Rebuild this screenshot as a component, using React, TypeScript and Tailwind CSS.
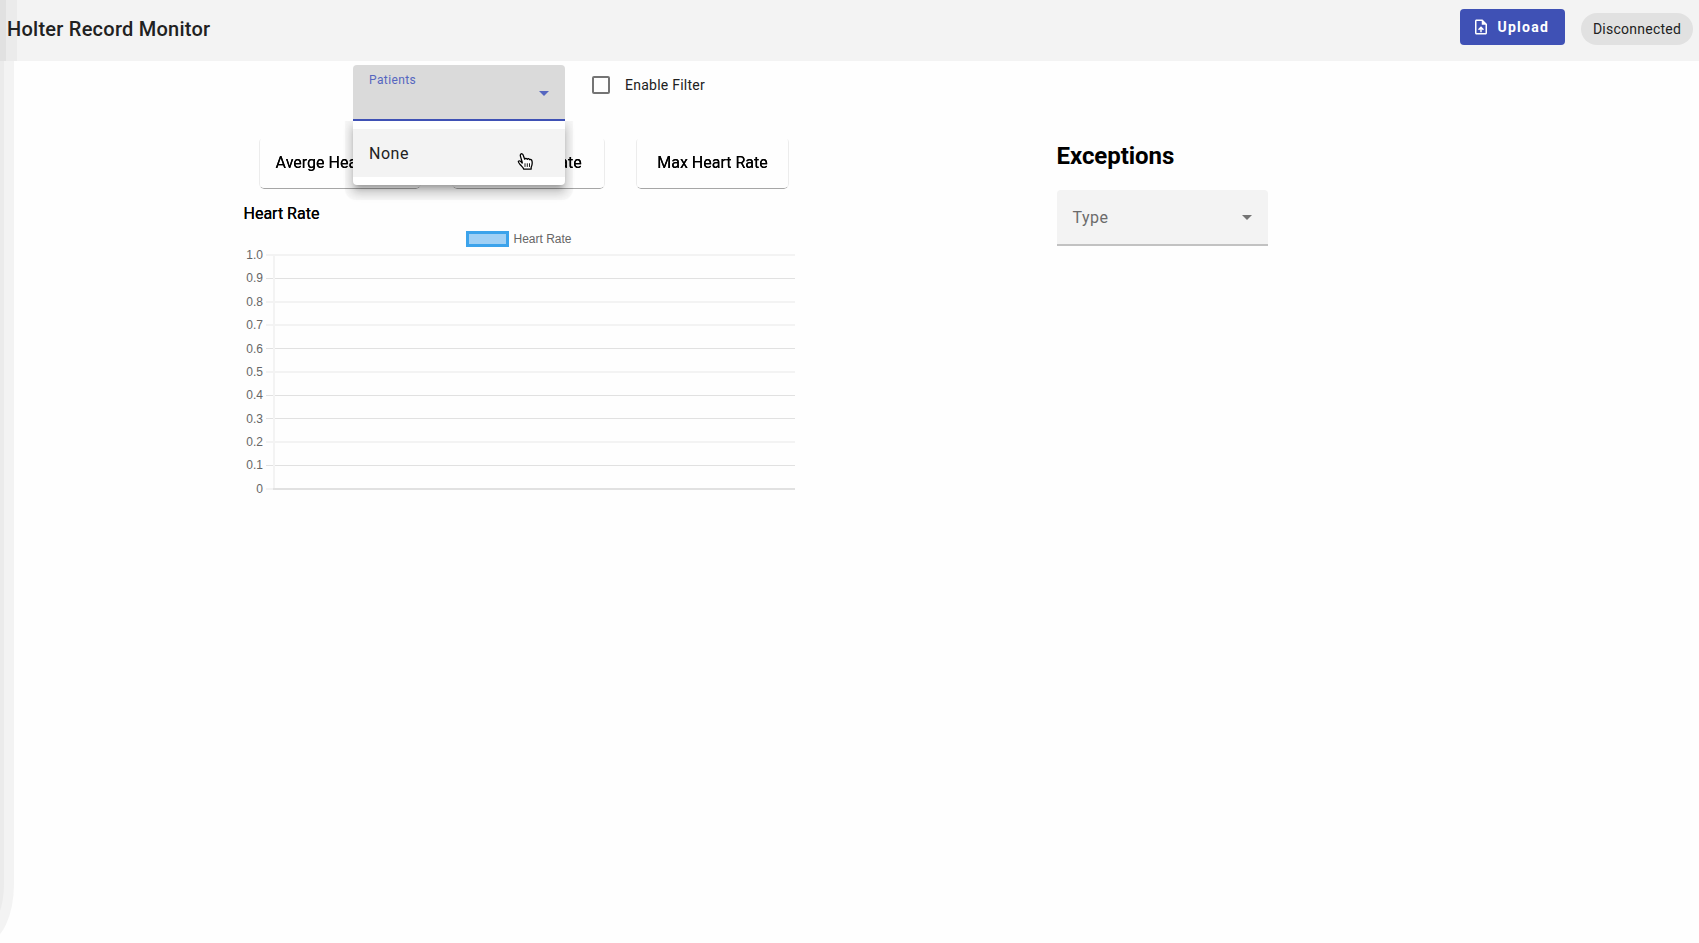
const rows = [
  { label: "1.0", y: 3, thin: false },
  { label: "0.9", y: 26.5, thin: true },
  { label: "0.8", y: 50, thin: false },
  { label: "0.7", y: 73, thin: false },
  { label: "0.6", y: 97, thin: true },
  { label: "0.5", y: 120, thin: false },
  { label: "0.4", y: 143.5, thin: true },
  { label: "0.3", y: 167, thin: true },
  { label: "0.2", y: 190, thin: false },
  { label: "0.1", y: 213.5, thin: true },
  { label: "0", y: 237, thin: false },
];

function Caret({ className }: { className: string }) {
  return (
    <svg className={className} width="10" height="5" viewBox="0 0 10 5">
      <path d="M0 0h10L5 5z" fill="currentColor" />
    </svg>
  );
}

function HandCursor() {
  return (
    <svg className="absolute left-[163.5px] top-[31px]" width="18" height="19" viewBox="0 0 18 19">
      <path
        d="M5.2 10.2 3.5 4.4C2.7 1.6 5.3.8 6.2 3.2l1.5 4c.6-1.2 2.1-1 2.5.1.7-1 2-.7 2.4.4.9-.8 2.2 0 2.4 1.4.5 2.6.2 4.2-.8 6.1l-.1 2H6.8c-.6-2-2.2-2.9-3.5-4.5C1.9 11.1.8 10 1.5 9.2c.9-1 2.1-.1 3.7 1.8z"
        fill="#fff"
        stroke="#000"
        strokeWidth="1.3"
        strokeLinejoin="round"
      />
      <path d="M8 11.3v3.6M10.3 11.3v3.6M12.5 11.3v3.6" stroke="#000" strokeWidth="0.9" />
    </svg>
  );
}

function Header() {
  return (
    <header className="flex h-[61px] shrink-0 items-start justify-between bg-[#f3f3f3] bg-[linear-gradient(90deg,#e1e1e1_6px,#ebebeb_6px,#ebebeb_17px,#f3f3f3_17px)] pr-[6px]">
      <h1 className="pl-[7px] pt-[13px] text-[20px] font-medium leading-8 tracking-[0.25px] text-[#212121]">
        Holter Record Monitor
      </h1>
      <div className="flex items-start">
        <button className="mt-[9px] flex h-9 w-[105.5px] items-center rounded bg-[#3f51b5] pl-[12px] text-white">
          <svg width="18" height="18" viewBox="0 0 24 24" fill="currentColor">
            <path d="M14 2H6c-1.1 0-1.99.9-1.99 2L4 20c0 1.1.89 2 1.99 2H18c1.1 0 2-.9 2-2V8l-6-6zm4 18H6V4h7v5h5v11zM8 15.01l1.41 1.41L11 14.84V19h2v-4.16l1.59 1.59L16 15.01 12.01 11 8 15.01z" />
          </svg>
          <span className="pl-[8px] text-[14px] font-bold leading-[34px] tracking-[1.25px]">Upload</span>
        </button>
        <div className="ml-4 mt-[13px] flex h-8 w-[112px] items-center justify-center rounded-full bg-[#e1e1e1] text-[14px] tracking-[0.25px] text-[#212121]">
          Disconnected
        </div>
      </div>
    </header>
  );
}

function Card({ title, className }: { title: string; className: string }) {
  return (
    <div
      className={`flex h-[52px] items-center justify-center whitespace-nowrap rounded-[5px] border-x border-b border-x-[#ececec] border-b-[#a6a6a6] pt-px text-[16px] text-black [text-shadow:0_0_0.3px_#000] [mask-image:linear-gradient(transparent_2px,#000_3px)] ${className}`}
    >
      {title}
    </div>
  );
}

function Chart() {
  return (
    <svg className="block overflow-visible" width="560" height="245" viewBox="0 0 560 245">
      {rows.map((r) => (
        <g key={r.label}>
          <rect
            x="31"
            y={Math.floor(r.y - 0.5)}
            width="529"
            height={r.thin ? 1 : 2}
            fill={r.thin ? "#e1e1e1" : "#f3f3f3"}
            shapeRendering="crispEdges"
          />
          <text x="28" y={r.y + 3.5} textAnchor="end" fontSize="12" fill="#666" fontFamily="Liberation Sans, Arial, sans-serif">
            {r.label}
          </text>
        </g>
      ))}
      <rect x="38" y="3" width="2" height="234" fill="#f3f3f3" />
      <rect x="38" y="236" width="522" height="2" fill="#e1e1e1" />
    </svg>
  );
}

export default function App() {
  return (
    <div className="relative flex h-[943px] w-[1699px] flex-col overflow-hidden bg-[#fefefe] font-['Roboto',sans-serif]">
      <Header />
      <div className="flex min-h-0 flex-1">
        <aside className="-ml-[14px] h-[881px] w-[28px] shrink-0 overflow-hidden rounded-br-[28px_58px] bg-[#f3f3f3]">
          <div className="h-[866px] w-[18px] rounded-br-[18px_43px] bg-[#ebebeb]" />
        </aside>
        <main className="flex">
          <section className="w-[1043px] pl-[221px]">
            <div className="flex pl-[118px] pt-[4px]">
              <div className="relative h-14 w-[212px] rounded-t border-b-2 border-[#3f51b5] bg-[#dadada] text-[#5566c0]">
                <div className="pl-4 pt-[6px] text-[12px] leading-[18px] tracking-[0.4px]">Patients</div>
                <Caret className="absolute right-4 top-[26px]" />
                <div className="absolute left-0 top-14 z-10 h-16 w-[212px] rounded-b bg-white py-2 shadow-[0_5px_5px_-3px_rgba(0,0,0,0.2),0_8px_10px_1px_rgba(0,0,0,0.14),0_3px_10px_2px_rgba(0,0,0,0.10),0_7px_1px_8px_rgba(0,0,0,0.03)] [clip-path:inset(0_-30px_-40px_-30px)]">
                  <div className="flex h-12 items-center bg-[#f3f3f3] pl-4 pt-px text-[16px] tracking-[0.5px] text-[#212121]">
                    None
                  </div>
                  <HandCursor />
                </div>
              </div>
              <label className="flex h-[18px] items-center pl-[27px] mt-[11px]">
                <span className="size-[18px] rounded-[2px] border-2 border-[#747474]" />
                <span className="pl-[15px] text-[14px] tracking-[0.25px] text-[#212121]">Enable Filter</span>
              </label>
            </div>
            <div className="flex gap-[31px] pl-[24px] pt-[16px]">
              <Card title="Averge Heart Rate" className="w-[162px]" />
              <Card title="Min Heart Rate" className="w-[153px]" />
              <Card title="Max Heart Rate" className="w-[153px]" />
            </div>
            <h2 className="pl-[8.5px] pt-[13px] text-[16px] font-normal leading-6 text-black [text-shadow:0_0_0.3px_#000]">
              Heart Rate
            </h2>
            <div className="flex h-[26px] items-start pl-[231px] pt-[5px]">
              <span className="h-4 w-[43px] border-[3px] border-[#3ca3eb] bg-[#a0d0f5]" />
              <span className="pl-[4.5px] font-['Liberation_Sans',Arial,sans-serif] text-[12px] leading-4 text-[#666]">
                Heart Rate
              </span>
            </div>
            <Chart />
          </section>
          <section className="w-[211px] pt-[79px]">
            <h2 className="-ml-[0.5px] text-[24px] font-bold leading-[32px] tracking-[-0.05px] text-black">Exceptions</h2>
            <div className="mt-[18px] flex h-14 items-center justify-between rounded-t border-b-2 border-[#c2c2c2] bg-[#f3f3f3] pl-[15.5px] pr-4 pt-px text-[#6b6b6b]">
              <span className="text-[16px] tracking-[0.5px]">Type</span>
              <Caret className="text-[#747474]" />
            </div>
          </section>
        </main>
      </div>
    </div>
  );
}
